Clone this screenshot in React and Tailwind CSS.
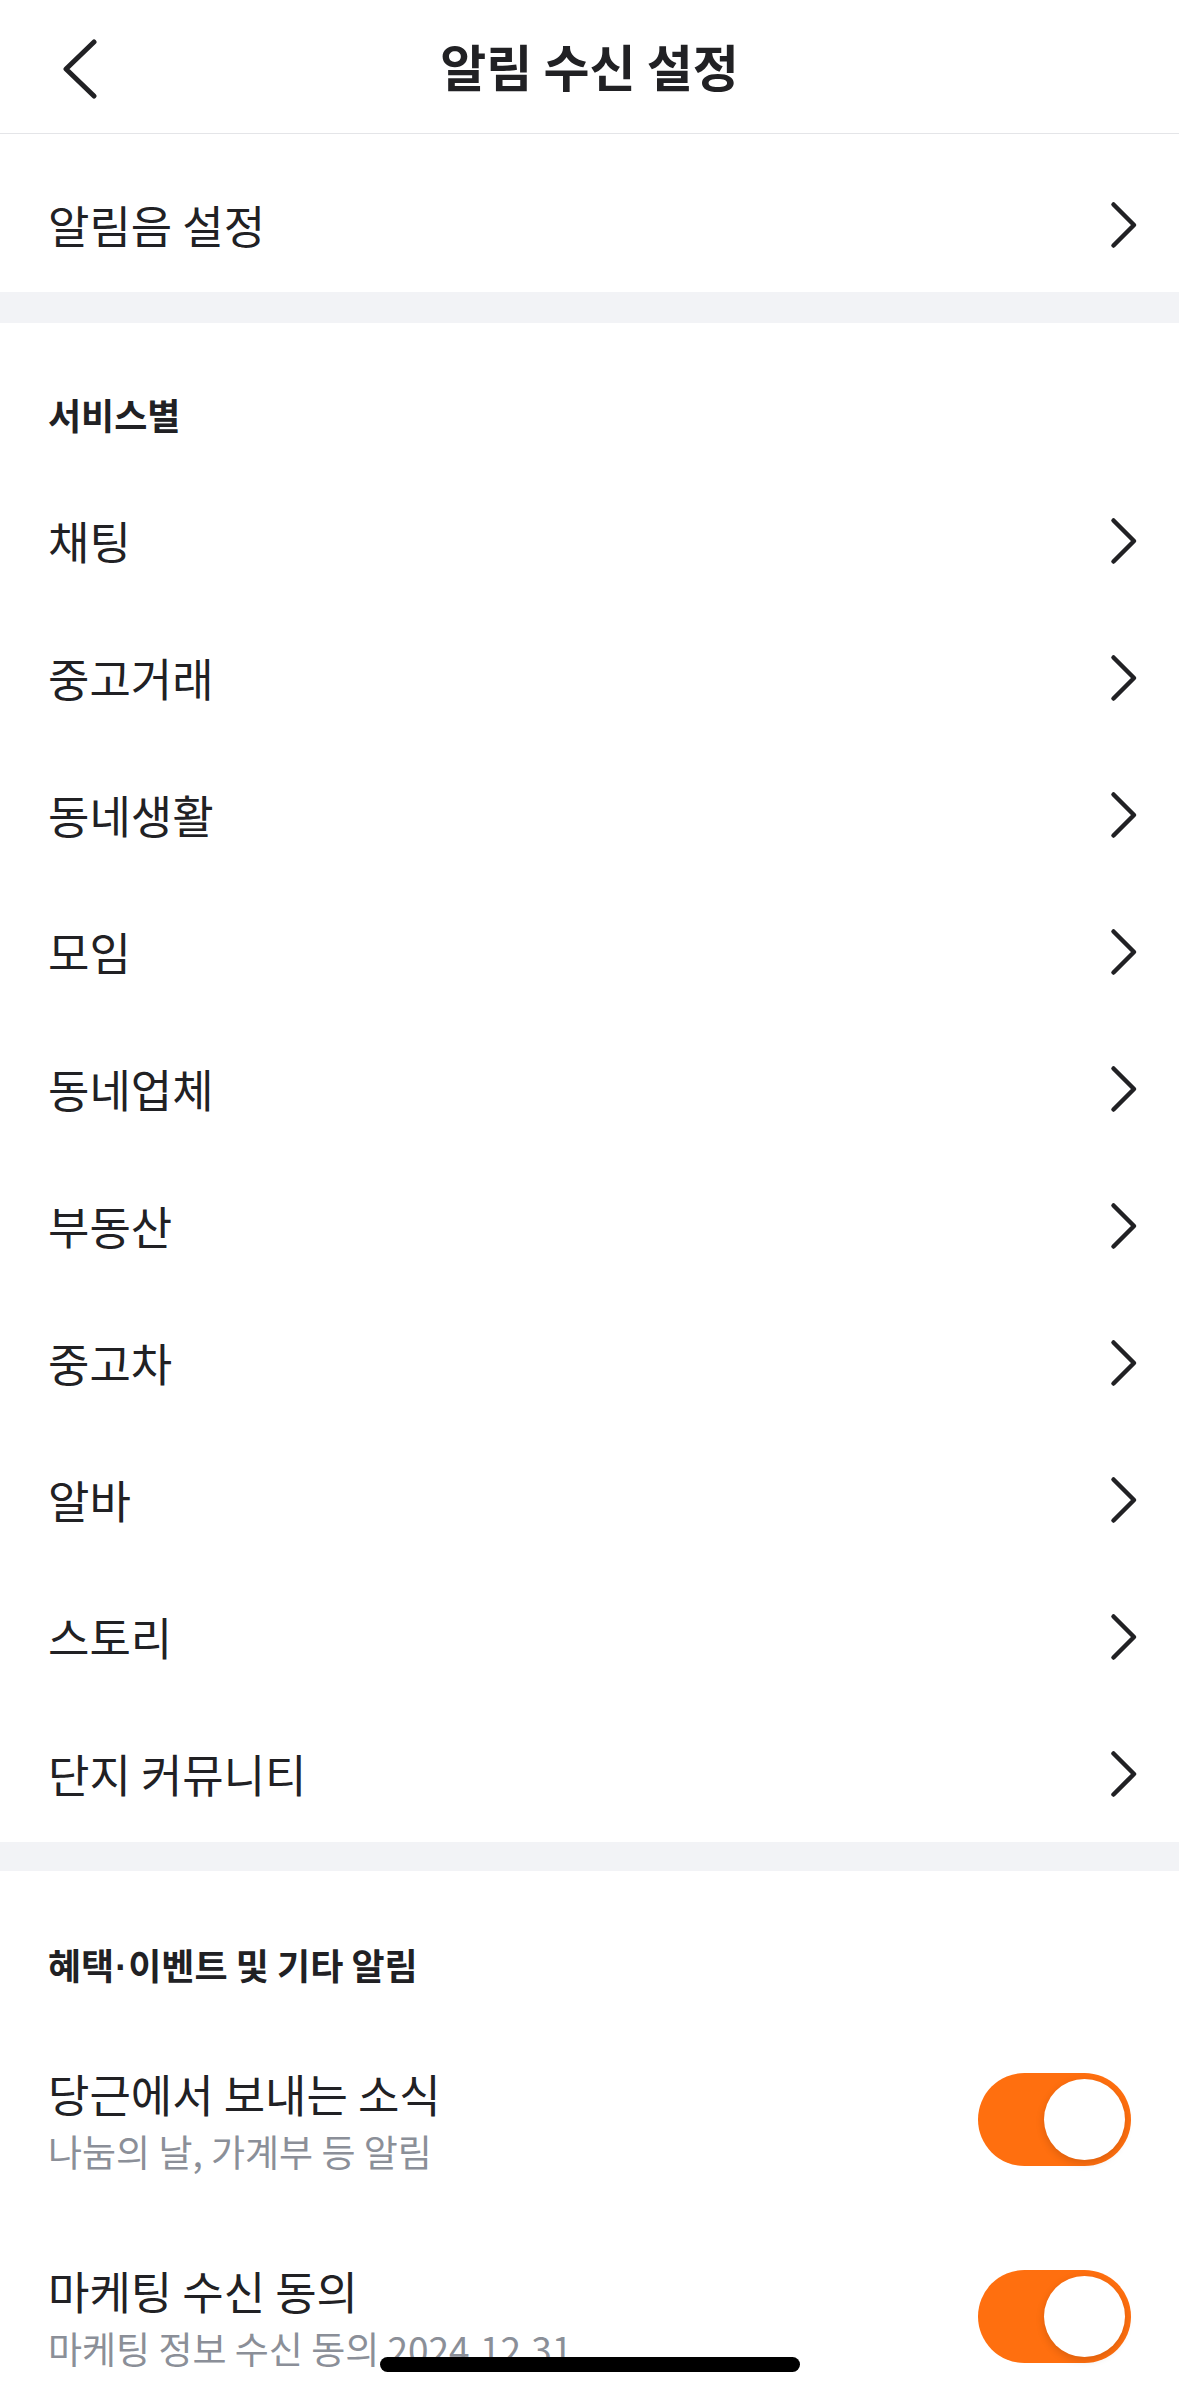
import { useState } from "react";

const services = ["채팅", "중고거래", "동네생활", "모임", "동네업체", "부동산", "중고차", "알바", "스토리", "단지 커뮤니티"];

function ChevronRight() {
  return (
    <svg width="28" height="48" viewBox="0 0 28 48" fill="none">
      <path d="M3.5 3.5 L24 24 L3.5 44.5" stroke="#212124" strokeWidth="4.5" strokeLinecap="round" strokeLinejoin="round" />
    </svg>
  );
}

function Toggle({ on, onClick }) {
  return (
    <button
      onClick={onClick}
      className={`w-[153px] h-[93px] rounded-full p-[6px] flex items-center shrink-0 ${on ? "bg-[#ff6f0f] justify-end" : "bg-[#dcdee3] justify-start"}`}
    >
      <span className="block w-[81px] h-[81px] rounded-full bg-white shadow-[0_3px_8px_rgba(0,0,0,0.15)]" />
    </button>
  );
}

function App() {
  const [news, setNews] = useState(true);
  const [marketing, setMarketing] = useState(true);

  return (
    <div className="relative min-h-screen bg-white text-[#212124] font-['Noto_Sans_CJK_KR','Noto_Sans',sans-serif]">
      {/* Header */}
      <div className="h-[134px] flex items-center border-b border-[#e4e5e8] relative">
        <button className="absolute left-[61px] top-[39px]">
          <svg width="37" height="60" viewBox="0 0 37 60" fill="none">
            <path d="M33 3 L5 30 L33 57" stroke="#212124" strokeWidth="5" strokeLinecap="round" strokeLinejoin="round" />
          </svg>
        </button>
        <h1 className="w-full text-center text-[50px] font-bold leading-[60px] -mt-[4px]">알림 수신 설정</h1>
      </div>

      {/* 알림음 설정 */}
      <div className="flex items-center justify-between pl-[48px] pr-[41px] pt-[64px] pb-[40px]">
        <span className="text-[45px] leading-[54px]">알림음 설정</span>
        <ChevronRight />
      </div>

      <div className="h-[31px] bg-[#f2f3f6]" />

      {/* 서비스별 */}
      <div className="pt-[66px]">
        <h2 className="px-[48px] text-[36px] font-bold leading-[50px] mb-[33px]">서비스별</h2>
        {services.map((s) => (
          <div key={s} className="h-[137px] flex items-center justify-between pl-[48px] pr-[41px]">
            <span className="text-[45px] leading-[54px]">{s}</span>
            <ChevronRight />
          </div>
        ))}
      </div>

      <div className="h-[29px] bg-[#f2f3f6]" />

      {/* 혜택 */}
      <div className="pt-[68px]">
        <h2 className="px-[48px] h-[50px] overflow-hidden text-[36px] font-bold leading-[50px] mb-[32px]">
          혜택<span className="font-['Liberation_Sans'] mx-[1px]">·</span>이벤트 및 기타 알림
        </h2>
        <div className="h-[197px] flex items-center justify-between pl-[48px] pr-[48px]">
          <div className="flex flex-col gap-[6px]">
            <span className="text-[45px] leading-[56px]">당근에서 보내는 소식</span>
            <span className="text-[37px] leading-[46px] text-[#8b8f98]">나눔의 날, 가계부 등 알림</span>
          </div>
          <Toggle on={news} onClick={() => setNews(!news)} />
        </div>
        <div className="h-[197px] flex items-center justify-between pl-[48px] pr-[48px]">
          <div className="flex flex-col gap-[6px]">
            <span className="text-[45px] leading-[56px]">마케팅 수신 동의</span>
            <span className="text-[37px] leading-[46px] text-[#8b8f98]">마케팅 정보 수신 동의 2024.12.31</span>
          </div>
          <Toggle on={marketing} onClick={() => setMarketing(!marketing)} />
        </div>
      </div>

      {/* home indicator */}
      <div className="fixed left-[380px] top-[2357px] w-[420px] h-[15px] rounded-full bg-black" />
    </div>
  );
}

export default App;
